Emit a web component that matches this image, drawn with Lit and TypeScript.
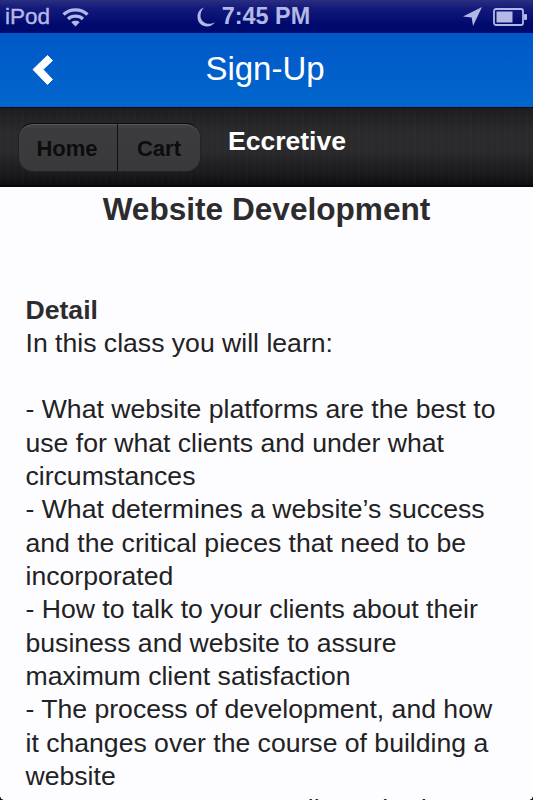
import { LitElement, html, css } from "lit";
import { customElement } from "lit/decorators.js";

@customElement("app-root")
export class AppRoot extends LitElement {
  static styles = css`
    :host { display: block; width: 533px; height: 800px; overflow: hidden; position: relative; background: #fdfdff; font-family: "Liberation Sans", Arial, sans-serif; }
    .status { height: 33px; box-sizing: border-box; padding: 0 5px; display: grid; grid-template-columns: 1fr auto 1fr; align-items: center; color: #b4b8e4;
      background: linear-gradient(#2a2f80 0, #141a7c 8px, #000a6e 24px, #000a6c 100%); }
    .st-left { display: flex; align-items: center; gap: 12px; font-size: 22.5px; font-weight: 400; -webkit-text-stroke: 0.4px #b4b8e4; }
    .st-mid { display: flex; align-items: center; gap: 7px; font-size: 23.4px; font-weight: 700; margin-right: 26px; }
    .st-right { display: flex; align-items: center; justify-content: flex-end; gap: 11px; }
    svg { display: block; }
    .nav { height: 74px; display: grid; grid-template-columns: 1fr auto 1fr; align-items: center; color: #fff; padding: 0 32px;
      background: linear-gradient(#0158c8, #0166cc); box-sizing: border-box; }
    .title { font-size: 33px; margin-top: -2px; margin-right: 3px; }
    .bar { height: 80px; box-sizing: border-box; display: flex; padding: 15px 0 0 18px; gap: 28px; border-top: 1px solid #0c0c0e; border-bottom: 2px solid #08080a;
      background:
        repeating-linear-gradient(90deg, rgba(255,255,255,0.006) 0 3px, rgba(0,0,0,0.012) 3px 7px),
        linear-gradient(#1c1c1e 0, #2a2a2c 30%, #2a2a2c 55%, #1a1a1c 85%, #0e0e10 100%); }
    .seg { width: 183px; height: 49px; box-sizing: border-box; display: flex; border-radius: 15px; border: 1px solid #232325; border-top-color: #0c0c0e;
      background: linear-gradient(#434345 0, #3c3c3e 10%, #39393b 100%); box-shadow: inset 0 1px 0 #58585a; overflow: hidden; }
    .seg span { display: flex; align-items: center; justify-content: center; padding-top: 3px; box-sizing: border-box; font-size: 22px; font-weight: 700; color: #0c0c0e; }
    .seg .a { width: 99px; padding-right: 2px; border-right: 1px solid #111113; }
    .seg .b { flex: 1; }
    .brand { font-size: 26.5px; font-weight: 700; color: #fff; line-height: 34px; margin-top: 1px; margin-left: -1px; }
    .heading { margin: 0; padding-top: 4px; text-align: center; font-size: 31.6px; line-height: 37px; font-weight: 700; color: #2c2c2e; }
    .body { padding: 0 25.5px; margin-top: 65.5px; font-size: 26.6px; line-height: 33.33px; color: #222224; white-space: pre-line; }
    .body b { color: #2c2c2e; }
    .corner { position: absolute; bottom: 0; width: 4px; height: 4px; }
    .cl { left: 0; background: radial-gradient(circle at 100% 0, transparent 3.5px, #111 4px); }
    .cr { right: 0; background: radial-gradient(circle at 0 0, transparent 3.5px, #111 4px); }
  `;

  render() {
    return html`
      <div class="status">
        <div class="st-left">
          <span>iPod</span>
          <svg width="27" height="20" viewBox="0 0 27 20" fill="none" stroke="#b4b8e4" stroke-width="3.2">
            <path d="M1.5 7.5C8 1.2 19 1.2 25.5 7.5"/>
            <path d="M6 12C10 8.2 17 8.2 21 12"/>
            <path d="M13.5 19.5L9.3 15.2C11.6 13.4 15.4 13.4 17.7 15.2Z" fill="#b4b8e4" stroke="none"/>
          </svg>
        </div>
        <div class="st-mid">
          <svg width="18" height="20" viewBox="0 0 18 20"><path d="M7 0.500C2.500 2 0.500 5.500 0.500 10c0 5.500 4.200 9.500 9.500 9.500 3.400 0 6.300-1.600 7.800-4.200-2 1.100-3.800 1.500-5.500 1.500-5 0-8.800-3.800-8.800-7.800C3.500 5.500 4.800 2.800 7 0.500Z" fill="#b4b8e4"/></svg>
          <span>7:45 PM</span>
        </div>
        <div class="st-right">
          <svg width="19" height="19" viewBox="0 0 19 19"><path d="M19 0L0 9.500L8.700 10.500L10 19Z" fill="#b4b8e4"/></svg>
          <svg width="35" height="18" viewBox="0 0 35 18" fill="none">
            <rect x="1" y="1" width="29" height="16" rx="2" stroke="#b4b8e4" stroke-width="1.800"/>
            <rect x="3.500" y="3.500" width="16" height="11" fill="#b4b8e4"/>
            <rect x="31" y="6" width="3" height="6" rx="1" fill="#b4b8e4"/>
          </svg>
        </div>
      </div>
      <div class="nav">
        <svg width="22" height="32" viewBox="0 0 22 32"><path d="M1 15.500L15.500 1.500L20.500 6.500L11 15.500L20.500 25.500L15.500 30.500Z" fill="#fff" stroke="#fff" stroke-width="1" stroke-linejoin="round"/></svg>
        <div class="title">Sign-Up</div>
        <span></span>
      </div>
      <div class="bar">
        <div class="seg"><span class="a">Home</span><span class="b">Cart</span></div>
        <div class="brand">Eccretive</div>
      </div>
      <h1 class="heading">Website Development</h1>
      <div class="body"><b>Detail</b>
In this class you will learn:

- What website platforms are the best to use for what clients and under what circumstances
- What determines a website’s success and the critical pieces that need to be incorporated
- How to talk to your clients about their business and website to assure maximum client satisfaction
- The process of development, and how it changes over the course of building a website
- How to manage your clients' budgets and specifications</div>
      <div class="corner cl"></div>
      <div class="corner cr"></div>
    `;
  }
}
